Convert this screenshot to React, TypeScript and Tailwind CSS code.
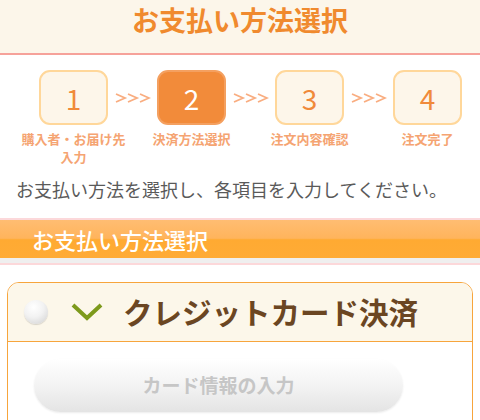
const font = { fontFamily: '"Noto Sans CJK JP", "Noto Sans", sans-serif' };

type Step = { n: string; label: React.ReactNode; active?: boolean };

const steps: Step[] = [
  { n: "1", label: <>購入者・お届け先<br />入力</> },
  { n: "2", label: "決済方法選択", active: true },
  { n: "3", label: "注文内容確認" },
  { n: "4", label: "注文完了" },
];

function StepBox({ step }: { step: Step }) {
  return (
    <div className="flex w-[69px] flex-col items-center">
      <div
        className={
          step.active
            ? "flex h-[55px] w-[69px] items-center justify-center rounded-[11px] border-2 border-[#f4a060] bg-[#f28b3a] text-[28px] leading-none text-white"
            : "flex h-[55px] w-[69px] items-center justify-center rounded-[11px] border-2 border-[#ffd79a] bg-[#fdf6ea] text-[28px] leading-none text-[#f08a3a]"
        }
      >
        {step.n}
      </div>
      <div className="mt-[5px] w-[130px] text-center text-[13px] font-bold leading-[18px] text-[#f5a472]">
        {step.label}
      </div>
    </div>
  );
}

// ">>>" の矢印
function Arrows() {
  return (
    <div className="flex h-[55px] w-[49px] items-center justify-center">
      <svg className="h-[10px] w-[36px]" viewBox="0 0 36 10">
        <g fill="none" stroke="#f9ad80" strokeWidth="1.8">
          <polyline points="1,1 10,5 1,9" />
          <polyline points="13,1 22,5 13,9" />
          <polyline points="25,1 34,5 25,9" />
        </g>
      </svg>
    </div>
  );
}

export default function App() {
  return (
    <div className="h-[420px] w-[480px] overflow-hidden bg-white" style={font}>
      {/* タイトル */}
      <div className="flex h-[55px] items-start justify-center border-b-2 border-[#f6a29a] bg-[#fcf6ea] pt-[2px]">
        <h1 className="text-[27px] font-bold leading-[36px] text-[#f08a2e]">お支払い方法選択</h1>
      </div>

      {/* ステップ */}
      <div className="flex items-start pl-[39px] pt-[15px]">
        <StepBox step={steps[0]} />
        <Arrows />
        <StepBox step={steps[1]} />
        <Arrows />
        <StepBox step={steps[2]} />
        <Arrows />
        <StepBox step={steps[3]} />
      </div>

      <p className="mt-[10px] pl-[16px] text-[18px] leading-[26px] text-[#5a5a5a]">
        お支払い方法を選択し、各項目を入力してください。
      </p>

      {/* 見出し帯 */}
      <div className="mt-[16px]">
        <div className="flex h-[40px] items-center border-t-2 border-[#fcd8da] bg-[linear-gradient(to_bottom,#ffbd72_0%,#ffb45c_48%,#ffaa32_52%,#ffab36_100%)] pl-[32px]">
          <span className="text-[22px] font-medium leading-none text-white">お支払い方法選択</span>
        </div>
        <div className="h-[7px] border-b-2 border-[#fcd8da] bg-[#efefef]" />
      </div>

      {/* クレジットカード */}
      <div className="mx-[7px] mt-[17px] overflow-hidden rounded-[12px] border-[1.5px] border-[#f7a53c]">
        <div className="flex h-[59px] items-center border-b-[1.5px] border-[#f7a53c] bg-[#fcf7ea] pl-[16px]">
          <div className="h-[24px] w-[24px] rounded-full bg-[radial-gradient(circle_at_40%_30%,#ffffff_0%,#f2f2f2_45%,#cfcfcf_100%)] shadow-[0_1px_1px_rgba(0,0,0,0.15)]" />
          <svg className="ml-[23px] h-[20px] w-[32px]" viewBox="0 0 32 20">
            <polyline points="2,3 16,16 30,3" fill="none" stroke="#7d9a1c" strokeWidth="4" />
          </svg>
          <span className="ml-[20px] text-[29.5px] font-bold leading-none text-[#6b4622]">クレジットカード決済</span>
        </div>
        <div className="h-[120px] bg-white pl-[26px] pt-[17px]">
          <button
            type="button"
            className="flex h-[53px] w-[369px] items-center justify-center rounded-full bg-[linear-gradient(to_bottom,#ffffff_0%,#f3f3f3_50%,#e4e4e4_100%)] text-[19px] font-bold text-[#c6c6c6] shadow-[0_1px_2px_rgba(0,0,0,0.08)]"
          >
            カード情報の入力
          </button>
        </div>
      </div>
    </div>
  );
}
